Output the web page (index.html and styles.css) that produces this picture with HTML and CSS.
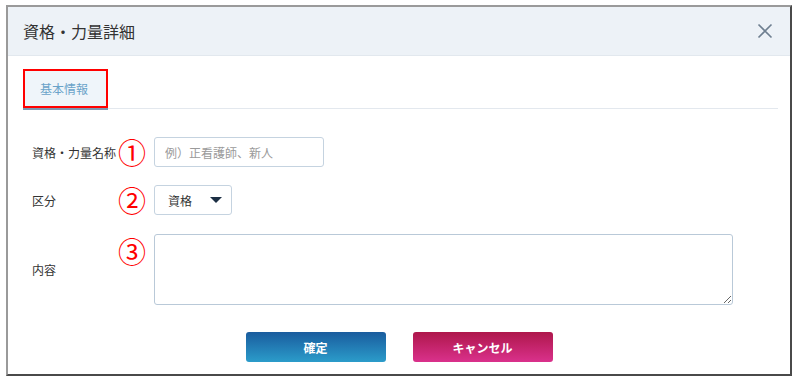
FILE: index.html
```html
<!DOCTYPE html>
<html lang="ja">
<head>
    <meta charset="UTF-8">
    <title>資格・力量詳細</title>
    <link rel="stylesheet" href="styles.css">
</head>
<body>
    <div class="dialog">
        <div class="dialog-header">
            <span class="dialog-title">資格・力量詳細</span>
            <svg class="close-icon" width="16" height="16" viewBox="0 0 16 16">
                <path d="M1.5 1.5 L14.5 14.5 M14.5 1.5 L1.5 14.5" stroke="#6e7f90" stroke-width="1.6" fill="none"/>
            </svg>
        </div>

        <div class="tabs">
            <div class="tab active">基本情報</div>
        </div>

        <div class="form">
            <div class="form-row">
                <label class="form-label">資格・力量名称</label>
                <span class="mark">①</span>
                <input class="text-input" type="text" placeholder="例）正看護師、新人">
            </div>
            <div class="form-row">
                <label class="form-label">区分</label>
                <span class="mark">②</span>
                <div class="select-box">
                    <span>資格</span>
                    <span class="caret"></span>
                </div>
            </div>
            <div class="form-row">
                <label class="form-label">内容</label>
                <span class="mark">③</span>
                <textarea class="text-area"></textarea>
            </div>
        </div>

        <div class="actions">
            <button class="btn btn-ok">確定</button>
            <button class="btn btn-cancel">キャンセル</button>
        </div>
    </div>
</body>
</html>
```

FILE: styles.css
```css
body {
    margin: 0;
    background: #fff;
    font-family: "Noto Sans CJK JP", "Noto Sans", sans-serif;
    color: #333;
}
.dialog {
    margin: 5px 0 0 6px;
    width: 782px;
    height: 367px;
    border-top: 2px solid #9a9a9a;
    border-left: 2px solid #9a9a9a;
    border-right: 2px solid #4a4a4a;
    border-bottom: 2px solid #4a4a4a;
    background: #fff;
    display: flex;
    flex-direction: column;
}
.dialog-header {
    height: 48px;
    background: #edf2f7;
    border-bottom: 1px solid #e2e8ee;
    display: flex;
    align-items: center;
    justify-content: space-between;
    padding: 0 17px 0 15px;
}
.dialog-title {
    font-size: 16px;
    color: #333;
}
.close-icon {
    display: block;
}
.tabs {
    margin: 13px 12px 0 15px;
    border-bottom: 1px solid #e3e8ee;
    display: flex;
}
.tab {
    width: 85px;
    height: 39px;
    box-sizing: border-box;
    border: 2px solid #f00;
    background: #eff5fa;
    color: #6aa3c9;
    font-size: 12px;
    display: flex;
    align-items: center;
    padding-left: 15px;
    box-shadow: 0 2px 0 #7d97b0;
}
.form {
    margin-top: 28px;
    padding-left: 24px;
    display: flex;
    flex-direction: column;
    gap: 18px;
}
.form-row {
    display: grid;
    grid-template-columns: 88px 34px auto;
    align-items: center;
}
.form-row:last-child {
    margin-top: 1px;
}
.form-label {
    font-size: 12px;
    color: #333;
}
.mark {
    align-self: start;
    margin: 0 0 0 -2px;
    font-size: 28px;
    line-height: 30px;
    color: #f00;
}
.form-row:last-child .mark {
    margin-top: 2px;
}
.text-input {
    width: 170px;
    height: 30px;
    box-sizing: border-box;
    border: 1px solid #c5d3e0;
    border-radius: 3px;
    padding: 0 10px;
    font-family: inherit;
    font-size: 12px;
}
.text-input::placeholder {
    color: #9a9a9a;
}
.select-box {
    width: 78px;
    height: 30px;
    box-sizing: border-box;
    border: 1px solid #c5d3e0;
    border-radius: 3px;
    display: flex;
    align-items: center;
    padding-left: 13px;
    gap: 18px;
    font-size: 12px;
    color: #333;
}
.caret {
    width: 0;
    height: 0;
    border-left: 6px solid transparent;
    border-right: 6px solid transparent;
    border-top: 6px solid #1c2f44;
}
.text-area {
    width: 579px;
    height: 71px;
    box-sizing: border-box;
    border: 1px solid #b9c9d8;
    border-radius: 3px;
    font-family: inherit;
    font-size: 12px;
    margin: 0;
}
.actions {
    margin-top: 27px;
    display: flex;
    justify-content: center;
    gap: 27px;
}
.btn {
    width: 140px;
    height: 30px;
    border: none;
    border-radius: 3px;
    color: #fff;
    font-family: inherit;
    font-size: 12px;
    font-weight: bold;
    cursor: pointer;
}
.btn-ok {
    background: linear-gradient(#1a5c9e, #2b9cca);
}
.btn-cancel {
    background: linear-gradient(#ae174b, #da318c);
}
```
